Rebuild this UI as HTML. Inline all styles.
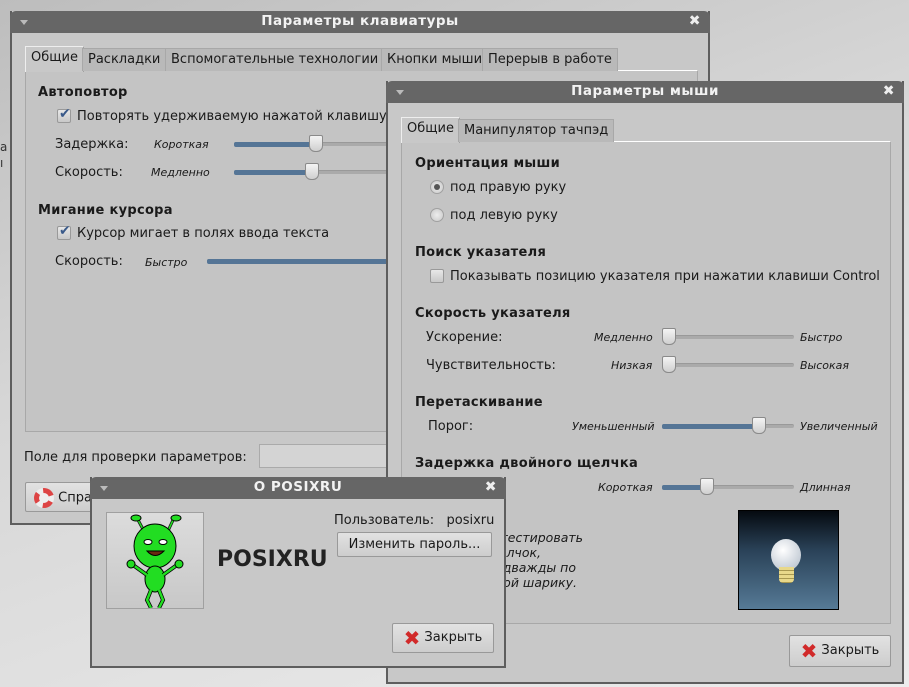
<!DOCTYPE html>
<html><head><meta charset="utf-8"><style>
*{margin:0;padding:0;box-sizing:border-box}
body{width:909px;height:687px;overflow:hidden;position:relative;font-family:"DejaVu Sans","Liberation Sans",sans-serif;font-size:13px;color:#1a1a1a;background:linear-gradient(160deg,#bdbdbd 0%,#d6d6d6 40%,#ececec 100%)}
.a{position:absolute;white-space:nowrap}
.t{margin-top:2px}
.win{position:absolute;background:#c8c8c8;border:2px solid #5e5e5e;border-top:none}
.tb{position:absolute;left:-2px;right:-2px;top:0;height:22px;background:#666;border-radius:6px 6px 0 0;color:#f2f2f2;font-weight:bold;font-size:13.5px;text-align:center;line-height:21px;letter-spacing:.5px}
.tb .m{position:absolute;left:10px;top:9px;width:0;height:0;border:4px solid transparent;border-top:5px solid #bbb}
.tb .x{position:absolute;right:9px;top:0;font-size:14px;color:#eee}
.panel{position:absolute;border:1px solid #a8a8a8;border-top-color:#fff;background:#c4c4c4}
.tab{position:absolute;height:23px;line-height:22px;padding:0 5px;border:1px solid #a8a8a8;border-bottom:none;background:#b9b9b9}
.tab.on{background:#c8c8c8;border-color:#eee #a0a0a0 #a0a0a0 #eee;height:26px}
.h{position:absolute;font-weight:bold;font-size:13px;letter-spacing:.3px;margin-top:2px}
.i{position:absolute;font-style:italic;font-size:11px;white-space:nowrap;margin-top:1px}
.tr{position:absolute;height:4px;background:#aaa;border-radius:2px;border-top:1px solid #999}
.fill{position:absolute;left:0;top:-1px;height:5px;background:#557596;border-radius:2px}
.th{position:absolute;top:-8px;width:14px;height:17px;background:linear-gradient(#f4f4f4,#cfcfcf);border:1px solid #8a8a8a;border-radius:2px 2px 6px 6px}
.cb{position:absolute;width:14px;height:14px;border:1px solid #999;background:linear-gradient(#e8e8e8,#c8c8c8);border-radius:2px}
.cb b{position:absolute;left:1px;top:-4px;color:#3a5a8a;font-size:14px}
.rd{position:absolute;width:14px;height:14px;border-radius:50%;border:1px solid #a0a0a0;background:radial-gradient(#ededed,#c8c8c8)}
.btn{position:absolute;border:1px solid #999;border-radius:2px;background:linear-gradient(#e2e2e2,#cdcdcd);text-align:center}
.xi{display:inline-block;color:#d12a2a;font-weight:bold;font-size:20px;vertical-align:middle;margin-right:4px;line-height:1}
.rl{position:absolute;font-style:italic;font-size:12.5px;white-space:nowrap}
</style></head><body>

<div class="a" style="left:0;top:140px;font-size:12px;color:#333">а</div>
<div class="a" style="left:0;top:156px;font-size:12px;color:#333">ı</div>

<!-- keyboard window -->
<div class="win" style="left:10px;top:11px;width:700px;height:514px">
 <div class="tb"><span class="m"></span>Параметры клавиатуры<span class="x">✖</span></div>
 <div class="panel" style="left:13px;top:59px;width:673px;height:362px"></div>
 <div class="tab on" style="left:13px;top:35px">Общие</div>
 <div class="tab" style="left:70px;top:37px">Раскладки</div>
 <div class="tab" style="left:153px;top:37px">Вспомогательные технологии</div>
 <div class="tab" style="left:369px;top:37px">Кнопки мыши</div>
 <div class="tab" style="left:470px;top:37px">Перерыв в работе</div>
 <div class="h" style="left:26px;top:72px">Автоповтор</div>
 <div class="cb" style="left:45px;top:98px"><b>✔</b></div>
 <div class="a t" style="left:65px;top:96px">Повторять удерживаемую нажатой клавишу</div>
 <div class="a t" style="left:43px;top:124px">Задержка:</div>
 <div class="i" style="left:142px;top:126px">Короткая</div>
 <div class="tr" style="left:222px;top:131px;width:160px"><div class="fill" style="width:82px"></div><div class="th" style="left:75px"></div></div>
 <div class="a t" style="left:43px;top:152px">Скорость:</div>
 <div class="i" style="left:139px;top:154px">Медленно</div>
 <div class="tr" style="left:222px;top:159px;width:160px"><div class="fill" style="width:78px"></div><div class="th" style="left:71px"></div></div>
 <div class="h" style="left:26px;top:190px">Мигание курсора</div>
 <div class="cb" style="left:45px;top:215px"><b>✔</b></div>
 <div class="a t" style="left:65px;top:213px">Курсор мигает в полях ввода текста</div>
 <div class="a t" style="left:43px;top:241px">Скорость:</div>
 <div class="i" style="left:133px;top:244px">Быстро</div>
 <div class="tr" style="left:195px;top:248px;width:190px"><div class="fill" style="width:185px"></div></div>
 <div class="a t" style="left:12px;top:437px">Поле для проверки параметров:</div>
 <div class="a" style="left:247px;top:433px;width:140px;height:24px;background:#d4d4d4;border:1px solid #aaa"></div>
 <div class="btn" style="left:13px;top:471px;width:90px;height:30px;text-align:left;padding:5px 0 0 8px"><span style="display:inline-block;width:20px;height:20px;border-radius:50%;border:5px dashed #d44;background:#eee;vertical-align:middle"></span> Спра</div>
</div>

<!-- mouse window -->
<div class="win" style="left:386px;top:81px;width:518px;height:603px">
 <div class="tb"><span class="m"></span>Параметры мыши<span class="x">✖</span></div>
 <div class="panel" style="left:13px;top:60px;width:490px;height:483px"></div>
 <div class="tab on" style="left:13px;top:36px">Общие</div>
 <div class="tab" style="left:70px;top:38px">Манипулятор тачпэд</div>
 <div class="h" style="left:27px;top:73px">Ориентация мыши</div>
 <div class="rd" style="left:42px;top:99px"><span style="position:absolute;left:3px;top:3px;width:6px;height:6px;border-radius:50%;background:#555"></span></div>
 <div class="a t" style="left:62px;top:97px">под правую руку</div>
 <div class="rd" style="left:42px;top:127px"></div>
 <div class="a t" style="left:62px;top:125px">под левую руку</div>
 <div class="h" style="left:27px;top:162px">Поиск указателя</div>
 <div class="cb" style="left:42px;top:188px"></div>
 <div class="a t" style="left:62px;top:186px">Показывать позицию указателя при нажатии клавиши Control</div>
 <div class="h" style="left:27px;top:223px">Скорость указателя</div>
 <div class="a t" style="left:38px;top:247px">Ускорение:</div>
 <div class="i" style="left:206px;top:249px">Медленно</div>
 <div class="tr" style="left:274px;top:254px;width:132px"><div class="th" style="left:0"></div></div>
 <div class="i" style="left:412px;top:249px">Быстро</div>
 <div class="a t" style="left:38px;top:275px">Чувствительность:</div>
 <div class="i" style="left:223px;top:277px">Низкая</div>
 <div class="tr" style="left:274px;top:282px;width:132px"><div class="th" style="left:0"></div></div>
 <div class="i" style="left:412px;top:277px">Высокая</div>
 <div class="h" style="left:27px;top:312px">Перетаскивание</div>
 <div class="a t" style="left:40px;top:336px">Порог:</div>
 <div class="i" style="left:184px;top:338px">Уменьшенный</div>
 <div class="tr" style="left:274px;top:343px;width:132px"><div class="fill" style="width:100px"></div><div class="th" style="left:90px"></div></div>
 <div class="i" style="left:412px;top:338px">Увеличенный</div>
 <div class="h" style="left:27px;top:373px">Задержка двойного щелчка</div>
 <div class="i" style="left:210px;top:399px">Короткая</div>
 <div class="tr" style="left:274px;top:404px;width:132px"><div class="fill" style="width:46px"></div><div class="th" style="left:38px"></div></div>
 <div class="i" style="left:412px;top:399px">Длинная</div>
 <div class="rl" style="top:449px;right:319px">Чтобы протестировать</div>
 <div class="rl" style="top:464px;right:361px">двойной щелчок,</div>
 <div class="rl" style="top:479px;right:326px">щёлкните дважды по</div>
 <div class="rl" style="top:494px;right:325px">лампочке, подобной шарику.</div>
 <div class="a" style="left:350px;top:429px;width:101px;height:100px;border:1px solid #000;background:linear-gradient(#050a10,#2a4258 40%,#567a96)">
  <div style="position:absolute;left:32px;top:28px;width:30px;height:32px;border-radius:50%;background:radial-gradient(circle at 40% 35%,#fff,#aeb9c6)"></div>
  <div style="position:absolute;left:40px;top:56px;width:15px;height:16px;background:repeating-linear-gradient(#e8d88a 0 3px,#a89850 3px 4px);border-radius:0 0 4px 4px"></div>
 </div>
 <div class="btn" style="left:401px;top:554px;width:102px;height:32px;line-height:30px"><span class="xi">✖</span>Закрыть</div>
</div>

<!-- about window -->
<div class="win" style="left:90px;top:477px;width:416px;height:191px">
 <div class="tb"><span class="m"></span>О POSIXRU<span class="x">✖</span></div>
 <div class="a" style="left:14px;top:35px;width:98px;height:97px;border:1px solid #a0a0a0;background:linear-gradient(#dcdcdc,#c8c8c8)">
  <svg width="96" height="95" viewBox="0 0 96 95">
   <g stroke="#000" stroke-width="1" fill="#22dd22">
    <path d="M38 20 L30 5 M60 20 L67 5" stroke="#111" stroke-width="3"/>
    <path d="M38 20 L30 5 M60 20 L67 5" stroke="#22dd22" stroke-width="1.5"/>
    <ellipse cx="29" cy="5" rx="5" ry="3"/><ellipse cx="69" cy="5" rx="5" ry="3"/>
    <ellipse cx="48" cy="33" rx="21" ry="22"/>
    <ellipse cx="48" cy="66" rx="10" ry="13"/>
    <path d="M40 62 L26 52 M56 62 L70 52" stroke-width="4"/>
    <path d="M40 62 L26 52 M56 62 L70 52" stroke="#22dd22" stroke-width="2.5"/>
    <path d="M44 77 L40 87 L44 95 M52 77 L56 87 L52 95" stroke-width="4" fill="none"/>
    <path d="M44 77 L40 87 L44 95 M52 77 L56 87 L52 95" stroke="#22dd22" stroke-width="2.5" fill="none"/>
    <circle cx="24" cy="51" r="4"/><circle cx="72" cy="51" r="4"/>
   </g>
   <ellipse cx="41" cy="29" rx="4" ry="2.5" fill="#fff" stroke="#000"/><ellipse cx="56" cy="29" rx="4" ry="2.5" fill="#fff" stroke="#000"/>
   <path d="M40 38 Q48 47 57 38 Z" fill="#6a2a10" stroke="#000"/>
  </svg>
 </div>
 <div class="a" style="left:125px;top:70px;font-weight:bold;font-size:22px;color:#222">POSIXRU</div>
 <div class="a t" style="left:242px;top:34px">Пользователь:&nbsp;&nbsp; posixru</div>
 <div class="btn" style="left:245px;top:55px;width:155px;height:25px;line-height:23px">Изменить пароль...</div>
 <div class="btn" style="left:300px;top:146px;width:102px;height:30px;line-height:28px"><span class="xi">✖</span>Закрыть</div>
</div>
</body></html>
